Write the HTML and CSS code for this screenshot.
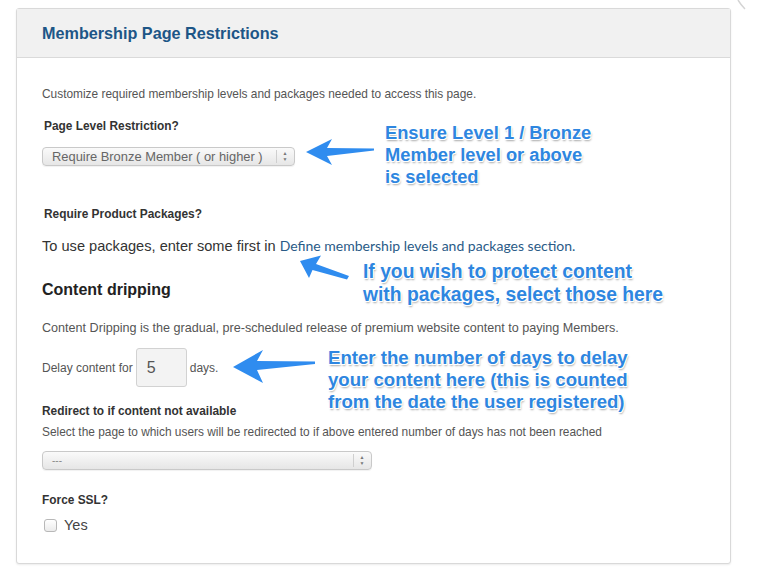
FILE: index.html
```html
<!DOCTYPE html>
<html lang="en">
<head>
    <meta charset="UTF-8">
    <meta name="viewport" content="width=device-width, initial-scale=1.0">
    <title>Membership Page Restrictions</title>
    <link rel="stylesheet" href="styles.css">
</head>
<body>
    <div class="page">
        <div class="panel">
            <div class="panel-header">
                <h2>Membership Page Restrictions</h2>
            </div>
            <div class="panel-body">
                <p class="intro">Customize required membership levels and packages needed to access this page.</p>

                <div class="label indent">Page Level Restriction?</div>
                <div class="select select-level">
                    <span class="select-text">Require Bronze Member ( or higher )</span>
                    <span class="select-arrows">&#9650;<br>&#9660;</span>
                </div>

                <div class="label indent small-label">Require Product Packages?</div>
                <p class="packages">To use packages, enter some first in <a href="#">Define membership levels and packages section.</a></p>

                <h3>Content dripping</h3>
                <p class="help wide">Content Dripping is the gradual, pre-scheduled release of premium website content to paying Members.</p>

                <div class="delay-row">
                    <span>Delay content for</span>
                    <div class="days-input">5</div>
                    <span>days.</span>
                </div>

                <div class="label redirect-label">Redirect to if content not available</div>
                <p class="help tight">Select the page to which users will be redirected to if above entered number of days has not been reached</p>
                <div class="select select-page">
                    <span class="select-text dashes">---</span>
                    <span class="select-arrows">&#9650;<br>&#9660;</span>
                </div>

                <div class="label ssl-label">Force SSL?</div>
                <label class="check-row">
                    <span class="checkbox"></span>
                    <span>Yes</span>
                </label>
            </div>
        </div>

        <!-- annotations drawn over the screenshot -->
        <svg class="arrows" width="768" height="571" viewBox="0 0 768 571">
            <path d="M738 0 Q741 5 745 9" fill="none" stroke="#d4d4d4" stroke-width="1.5"/>
            <path d="M306 152 L332 139 L327 148 L374 148.5 L374 150.5 L327 156 L332 165 Z" fill="#2f8cef"/>
            <path d="M300 261 L321 255.5 L316 264 L349 276 L347 279.5 L312.5 270 L309 278 Z" fill="#2f8cef"/>
            <path d="M233 367 L263 350 L257 361 L315 361.5 L315 364 L257 370 L263 383 Z" fill="#2f8cef"/>
        </svg>
        <div class="note note-level">Ensure Level 1 / Bronze<br>Member level or above<br>is selected</div>
        <div class="note note-packages">If you wish to protect content<br>with packages, select those here</div>
        <div class="note note-delay">Enter the number of days to delay<br>your content here (this is counted<br>from the date the user registered)</div>
    </div>
</body>
</html>
```

FILE: styles.css
```css
body {
    margin: 0;
    padding: 0;
    background: #fff;
    font-family: 'Liberation Sans', Arial, sans-serif;
    color: #555;
}

.page {
    position: relative;
    width: 768px;
    height: 571px;
    padding: 8px 0 0 16px;
    box-sizing: border-box;
    overflow: hidden;
}

.panel {
    width: 715px;
    border: 1px solid #d9d9d9;
    border-radius: 3px;
    box-shadow: 0 1px 2px rgba(0, 0, 0, 0.08);
    box-sizing: border-box;
    background: #fff;
}

.panel-header {
    height: 48px;
    background: #f1f1f1;
    border-bottom: 1px solid #dadada;
    padding-left: 25px;
    display: flex;
    align-items: center;
}

.panel-header h2 {
    margin: 0;
    font-size: 16.2px;
    font-weight: bold;
    color: #1d5687;
}

.panel-body {
    padding: 29px 25px 29px 25px;
}

.panel-body p {
    margin: 0;
}

.intro,
.help {
    font-size: 11.9px;
    line-height: 15px;
    color: #555;
}

.help.wide {
    font-size: 12.6px;
}

.label {
    font-size: 11.9px;
    line-height: 15px;
    font-weight: bold;
    color: #333;
}

.indent {
    padding-left: 2px;
    margin-top: 17px;
}

.small-label {
    margin-top: 41px;
}

.select {
    display: flex;
    align-items: center;
    height: 19px;
    box-sizing: border-box;
    border: 1px solid #c9c9c9;
    border-radius: 4px;
    background: linear-gradient(to bottom, #fafafa, #e6e6e6);
    box-shadow: 0 1px 1px rgba(0, 0, 0, 0.06);
}

.select-level {
    width: 253px;
    margin-top: 13px;
}

.select-page {
    width: 330px;
    margin-top: 11px;
}

.select-text {
    flex: 1;
    padding-left: 9px;
    font-size: 12.9px;
    color: #666;
    white-space: nowrap;
}

.select-text.dashes {
    font-size: 10px;
    color: #888;
}

.select-arrows {
    width: 16px;
    height: 13px;
    border-left: 1px solid #cfcfcf;
    font-size: 5px;
    line-height: 6px;
    color: #777;
    text-align: center;
    margin-right: 1px;
}

.packages {
    margin-top: 15px !important;
    font-size: 14.6px;
    line-height: 18px;
    color: #333;
}

.packages a {
    font-family: 'Lato', 'Liberation Sans', sans-serif;
    font-size: 14px;
    color: #2a5b87;
    text-decoration: none;
}

h3 {
    margin: 25px 0 0;
    font-size: 16px;
    line-height: 20px;
    font-weight: bold;
    color: #222;
}

h3 + .help {
    margin-top: 21px;
}

.delay-row {
    display: flex;
    align-items: center;
    gap: 3px;
    margin-top: 12px;
    font-size: 12px;
    color: #555;
}

.days-input {
    width: 51px;
    height: 39px;
    box-sizing: border-box;
    border: 1px solid #d2d2d2;
    border-radius: 3px;
    background: #f3f3f3;
    font-size: 16px;
    line-height: 37px;
    padding-left: 10px;
    color: #555;
}

.redirect-label {
    margin-top: 17px;
}

.help.tight {
    margin-top: 6px;
}

.ssl-label {
    margin-top: 23px;
}

.check-row {
    display: flex;
    align-items: center;
    gap: 7px;
    margin-top: 8px;
    padding-left: 2px;
    font-size: 14.5px;
    line-height: 18px;
    color: #444;
}

.checkbox {
    width: 11px;
    height: 11px;
    border: 1px solid #b8b8b8;
    border-radius: 3px;
    background: linear-gradient(to bottom, #fff, #ebebeb);
}

.arrows {
    position: absolute;
    top: 0;
    left: 0;
}

.note {
    position: absolute;
    font-size: 18.3px;
    font-weight: bold;
    line-height: 22px;
    color: #2e86e0;
    text-shadow: 1px 1px 0 #fff, -1px -1px 0 #fff, 1px -1px 0 #fff, -1px 1px 0 #fff, 1px 2px 2px rgba(0, 0, 0, 0.35);
    white-space: nowrap;
}

.note-level {
    left: 385px;
    top: 122px;
}

.note-packages {
    left: 363px;
    top: 260px;
    font-size: 19.3px;
    line-height: 23px;
}

.note-delay {
    left: 328px;
    top: 347px;
    font-size: 18.6px;
}
```
